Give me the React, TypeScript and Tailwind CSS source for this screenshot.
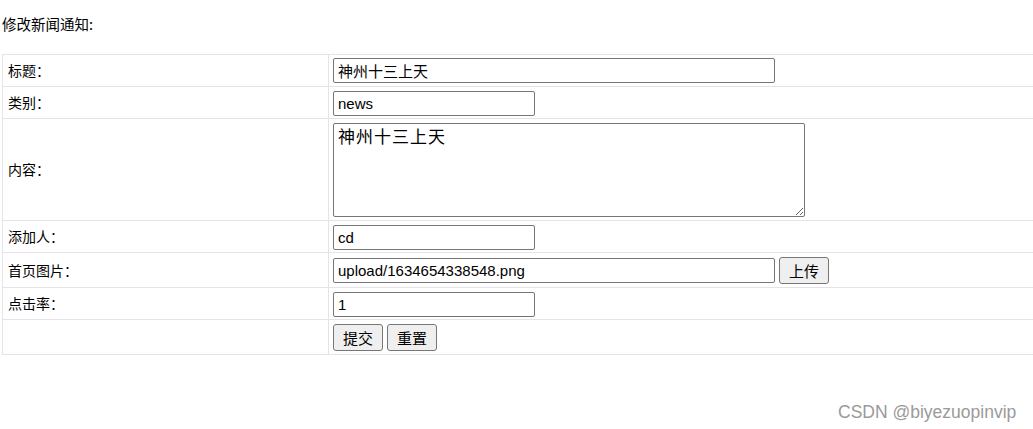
import { useState } from 'react'

const cjk = "font-['Microsoft_YaHei','Noto_Sans_CJK_SC',sans-serif]"
const field = "h-[25px] border border-[#767676] rounded-[2px] px-[4px] text-[15px] text-black bg-white font-['Liberation_Sans','Noto_Sans_CJK_SC',sans-serif] outline-none"
const btn = "h-[27px] w-[50px] border border-[#767676] rounded-[3px] bg-[#efefef] text-[15px] text-black font-['Noto_Sans_CJK_SC',sans-serif] leading-none"
const th = 'border border-[#e3e3e8] pl-[5px] text-[14px] text-black align-middle'
const td = 'border border-[#e3e3e8] pl-[4px] align-middle'

export default function App() {
  const [title, setTitle] = useState('神州十三上天')
  const [kind, setKind] = useState('news')
  const [content, setContent] = useState('神州十三上天')
  const [adder, setAdder] = useState('cd')
  const [pic, setPic] = useState('upload/1634654338548.png')
  const [hits, setHits] = useState('1')

  return (
    <div className={`w-[1033px] h-[429px] overflow-hidden bg-white relative ${cjk}`}>
      <div className="pt-[13px] pl-[2px] h-[54px] text-[14.5px] text-black">修改新闻通知:</div>

      <table className="ml-[2px] w-[1050px] border-collapse">
        <tbody>
          <tr className="h-[32px]">
            <td className={`${th} w-[326px]`}>标题：</td>
            <td className={td}>
              <input value={title} onChange={(e) => setTitle(e.target.value)} className={`${field} w-[442px]`} />
            </td>
          </tr>
          <tr className="h-[32px]">
            <td className={th}>类别：</td>
            <td className={td}>
              <input value={kind} onChange={(e) => setKind(e.target.value)} className={`${field} w-[202px]`} />
            </td>
          </tr>
          <tr className="h-[102px]">
            <td className={th}>内容：</td>
            <td className={td}>
              <textarea
                value={content}
                onChange={(e) => setContent(e.target.value)}
                className="block w-[472px] h-[94px] border border-[#767676] rounded-[2px] px-[4px] py-[1px] text-[17px] tracking-[1px] leading-[22px] text-black bg-white font-['Noto_Sans_CJK_SC',monospace] outline-none"
              />
            </td>
          </tr>
          <tr className="h-[32px]">
            <td className={th}>添加人：</td>
            <td className={td}>
              <input value={adder} onChange={(e) => setAdder(e.target.value)} className={`${field} w-[202px]`} />
            </td>
          </tr>
          <tr className="h-[35px]">
            <td className={th}>首页图片：</td>
            <td className={td}>
              <div className="flex items-center gap-[4px]">
                <input value={pic} onChange={(e) => setPic(e.target.value)} className={`${field} w-[442px]`} />
                <button className={btn}>上传</button>
              </div>
            </td>
          </tr>
          <tr className="h-[32px]">
            <td className={th}>点击率：</td>
            <td className={td}>
              <input value={hits} onChange={(e) => setHits(e.target.value)} className={`${field} w-[202px]`} />
            </td>
          </tr>
          <tr className="h-[35px]">
            <td className={th}></td>
            <td className={td}>
              <div className="flex items-center gap-[4px]">
                <button className={btn}>提交</button>
                <button className={btn}>重置</button>
              </div>
            </td>
          </tr>
        </tbody>
      </table>

      <div className="absolute left-[838px] top-[399px] text-[17.5px] text-[#9a9a9a] font-['Liberation_Sans',sans-serif]">CSDN @biyezuopinvip</div>
    </div>
  )
}
